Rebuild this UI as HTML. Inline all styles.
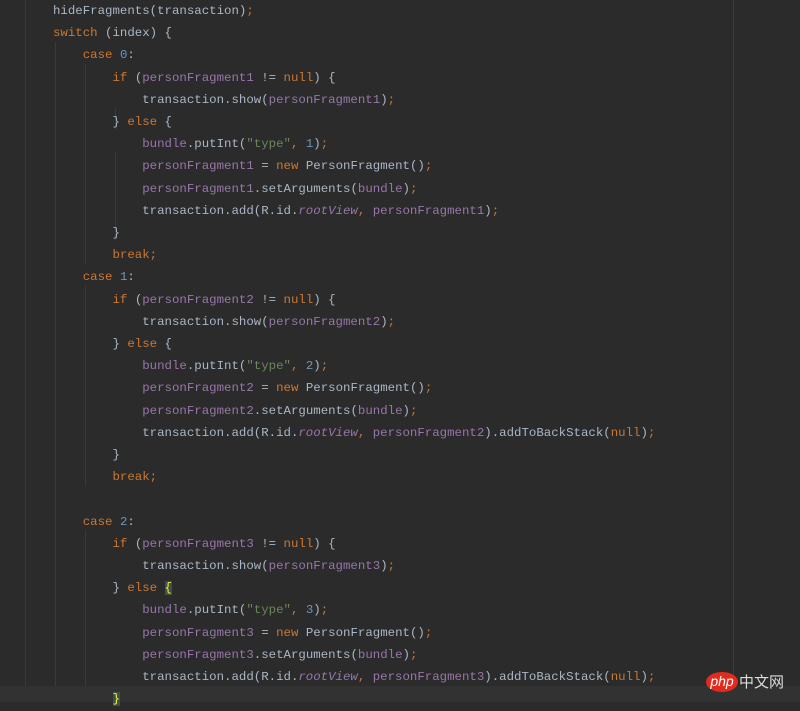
<!DOCTYPE html>
<html><head><meta charset="utf-8"><style>
body{margin:0;width:800px;height:702px;background:#2b2b2b;overflow:hidden;position:relative}
.m{position:absolute;left:733px;top:0;width:1px;height:702px;background:#3c3c3c}
.cl{position:absolute;left:0;top:686px;width:800px;height:16px;background:#323232}
.g{position:absolute;width:1px;background:#393939}
pre{position:absolute;left:53px;top:0px;margin:0;font-family:"Liberation Mono","Noto Sans CJK SC",monospace;font-size:12.4px;line-height:22.2px;color:#a9b7c6;white-space:pre}
.k{color:#cc7832}.f{color:#9876aa}.s{color:#6a8759}.n{color:#6897bb}.i{color:#9876aa;font-style:italic}
.b{background:#3b514d;color:#ffef28}
.logo{position:absolute;left:706px;top:672px;font-family:"Liberation Sans","Noto Sans CJK SC",sans-serif}
.php{display:inline-block;background:#e32b1d;color:#fff;border-radius:50%;width:32px;height:20px;line-height:19px;text-align:center;font-size:14px;font-style:italic}
.cn{color:#ddd;font-size:15px;vertical-align:top;margin-left:1px;line-height:21px}
</style></head><body>
<div class="g" style="left:25px;top:0;height:702px"></div>
<div class="g" style="left:55px;top:42px;height:660px"></div>
<div class="g" style="left:85px;top:64px;height:200px"></div>
<div class="g" style="left:85px;top:286px;height:200px"></div>
<div class="g" style="left:85px;top:530px;height:172px"></div>
<div class="g" style="left:115px;top:108px;height:22px"></div>
<div class="g" style="left:115px;top:152px;height:88px"></div>
<div class="m"></div>
<div class="cl"></div>
<pre>hideFragments(transaction)<span class="k">;</span>
<span class="k">switch</span> (index) {
    <span class="k">case </span><span class="n">0</span>:
        <span class="k">if </span>(<span class="f">personFragment1</span> != <span class="k">null</span>) {
            transaction.show(<span class="f">personFragment1</span>)<span class="k">;</span>
        } <span class="k">else </span>{
            <span class="f">bundle</span>.putInt(<span class="s">"type"</span><span class="k">, </span><span class="n">1</span>)<span class="k">;</span>
            <span class="f">personFragment1</span> = <span class="k">new </span>PersonFragment()<span class="k">;</span>
            <span class="f">personFragment1</span>.setArguments(<span class="f">bundle</span>)<span class="k">;</span>
            transaction.add(R.id.<span class="i">rootView</span><span class="k">, </span><span class="f">personFragment1</span>)<span class="k">;</span>
        }
        <span class="k">break;</span>
    <span class="k">case </span><span class="n">1</span>:
        <span class="k">if </span>(<span class="f">personFragment2</span> != <span class="k">null</span>) {
            transaction.show(<span class="f">personFragment2</span>)<span class="k">;</span>
        } <span class="k">else </span>{
            <span class="f">bundle</span>.putInt(<span class="s">"type"</span><span class="k">, </span><span class="n">2</span>)<span class="k">;</span>
            <span class="f">personFragment2</span> = <span class="k">new </span>PersonFragment()<span class="k">;</span>
            <span class="f">personFragment2</span>.setArguments(<span class="f">bundle</span>)<span class="k">;</span>
            transaction.add(R.id.<span class="i">rootView</span><span class="k">, </span><span class="f">personFragment2</span>).addToBackStack(<span class="k">null</span>)<span class="k">;</span>
        }
        <span class="k">break;</span>

    <span class="k">case </span><span class="n">2</span>:
        <span class="k">if </span>(<span class="f">personFragment3</span> != <span class="k">null</span>) {
            transaction.show(<span class="f">personFragment3</span>)<span class="k">;</span>
        } <span class="k">else </span><span class="b">{</span>
            <span class="f">bundle</span>.putInt(<span class="s">"type"</span><span class="k">, </span><span class="n">3</span>)<span class="k">;</span>
            <span class="f">personFragment3</span> = <span class="k">new </span>PersonFragment()<span class="k">;</span>
            <span class="f">personFragment3</span>.setArguments(<span class="f">bundle</span>)<span class="k">;</span>
            transaction.add(R.id.<span class="i">rootView</span><span class="k">, </span><span class="f">personFragment3</span>).addToBackStack(<span class="k">null</span>)<span class="k">;</span>
        <span class="b">}</span></pre>
<div class="logo"><span class="php">php</span><span class="cn">中文网</span></div>
</body></html>
